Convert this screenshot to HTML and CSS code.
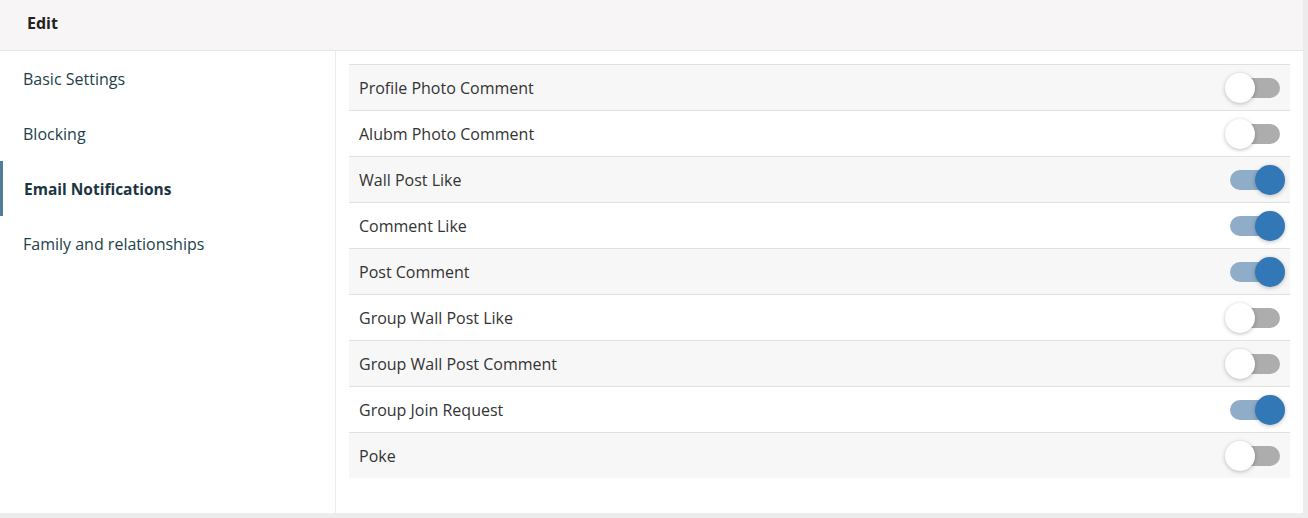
FILE: index.html
```html
<!DOCTYPE html>
<html lang="en">
<head>
    <meta charset="UTF-8">
    <meta name="viewport" content="width=device-width, initial-scale=1.0">
    <title>Edit Settings</title>
    <link rel="stylesheet" href="styles.css">
</head>
<body>
    <div class="card">
        <div class="card-header">Edit</div>
        <div class="card-body">
            <ul class="side-menu">
                <li><a href="#">Basic Settings</a></li>
                <li><a href="#">Blocking</a></li>
                <li class="active"><a href="#">Email Notifications</a></li>
                <li><a href="#">Family and relationships</a></li>
            </ul>

            <div class="settings">
                <div class="setting-row">
                    <span>Profile Photo Comment</span>
                    <label class="switch"><input type="checkbox"><span class="track"></span></label>
                </div>
                <div class="setting-row">
                    <span>Alubm Photo Comment</span>
                    <label class="switch"><input type="checkbox"><span class="track"></span></label>
                </div>
                <div class="setting-row">
                    <span>Wall Post Like</span>
                    <label class="switch"><input type="checkbox" checked><span class="track"></span></label>
                </div>
                <div class="setting-row">
                    <span>Comment Like</span>
                    <label class="switch"><input type="checkbox" checked><span class="track"></span></label>
                </div>
                <div class="setting-row">
                    <span>Post Comment</span>
                    <label class="switch"><input type="checkbox" checked><span class="track"></span></label>
                </div>
                <div class="setting-row">
                    <span>Group Wall Post Like</span>
                    <label class="switch"><input type="checkbox"><span class="track"></span></label>
                </div>
                <div class="setting-row">
                    <span>Group Wall Post Comment</span>
                    <label class="switch"><input type="checkbox"><span class="track"></span></label>
                </div>
                <div class="setting-row">
                    <span>Group Join Request</span>
                    <label class="switch"><input type="checkbox" checked><span class="track"></span></label>
                </div>
                <div class="setting-row">
                    <span>Poke</span>
                    <label class="switch"><input type="checkbox"><span class="track"></span></label>
                </div>
            </div>
        </div>
    </div>
</body>
</html>
```

FILE: styles.css
```css
body {
    font-family: "Open Sans", Arial, sans-serif;
    background-color: #ececec;
    margin: 0;
    padding: 0;
    color: #333;
}

.card {
    width: 1303px;
    height: 513px;
    background-color: #fff;
    display: flex;
    flex-direction: column;
}

.card-header {
    height: 51px;
    box-sizing: border-box;
    padding: 0 27px 4px 27px;
    display: flex;
    align-items: center;
    background-color: #f7f5f5;
    border-bottom: 1px solid #e6e6e6;
    font-weight: bold;
    font-size: 16px;
    color: #222;
}

.card-body {
    flex: 1;
    display: flex;
}

.side-menu {
    list-style: none;
    margin: 0;
    padding: 0;
    width: 335px;
    border-right: 1px solid #ececec;
}

.side-menu li {
    height: 55px;
    display: flex;
    align-items: center;
    padding-left: 23px;
    box-sizing: border-box;
}

.side-menu a {
    text-decoration: none;
    color: #233f4a;
    font-size: 16px;
}

.side-menu li.active {
    border-left: 3px solid #4e7e99;
    padding-left: 21px;
}

.side-menu li.active a {
    font-weight: bold;
    color: #1b3542;
    font-size: 15.5px;
}

.settings {
    flex: 1;
    padding: 13px 13px 0 13px;
}

.setting-row {
    height: 46px;
    box-sizing: border-box;
    border-top: 1px solid #e0e0e0;
    display: flex;
    align-items: center;
    justify-content: space-between;
    padding: 0 10px;
    font-size: 16px;
    color: #333;
}

.setting-row:nth-child(odd) {
    background-color: #f7f7f7;
}

/* toggle switch */
.switch {
    position: relative;
    width: 50px;
    height: 20px;
    margin-right: 0;
    cursor: pointer;
}

.switch input {
    display: none;
}

.track {
    position: absolute;
    top: 0;
    left: 0;
    width: 50px;
    height: 20px;
    border-radius: 10px;
    background-color: #adadad;
}

.track::before {
    content: "";
    position: absolute;
    top: -5px;
    left: -5px;
    width: 30px;
    height: 30px;
    border-radius: 50%;
    background-color: #fff;
    box-shadow: 0 1px 4px rgba(0, 0, 0, 0.25);
}

.switch input:checked + .track {
    background-color: #8fadc9;
}

.switch input:checked + .track::before {
    left: 25px;
    background-color: #3277b6;
}
```
